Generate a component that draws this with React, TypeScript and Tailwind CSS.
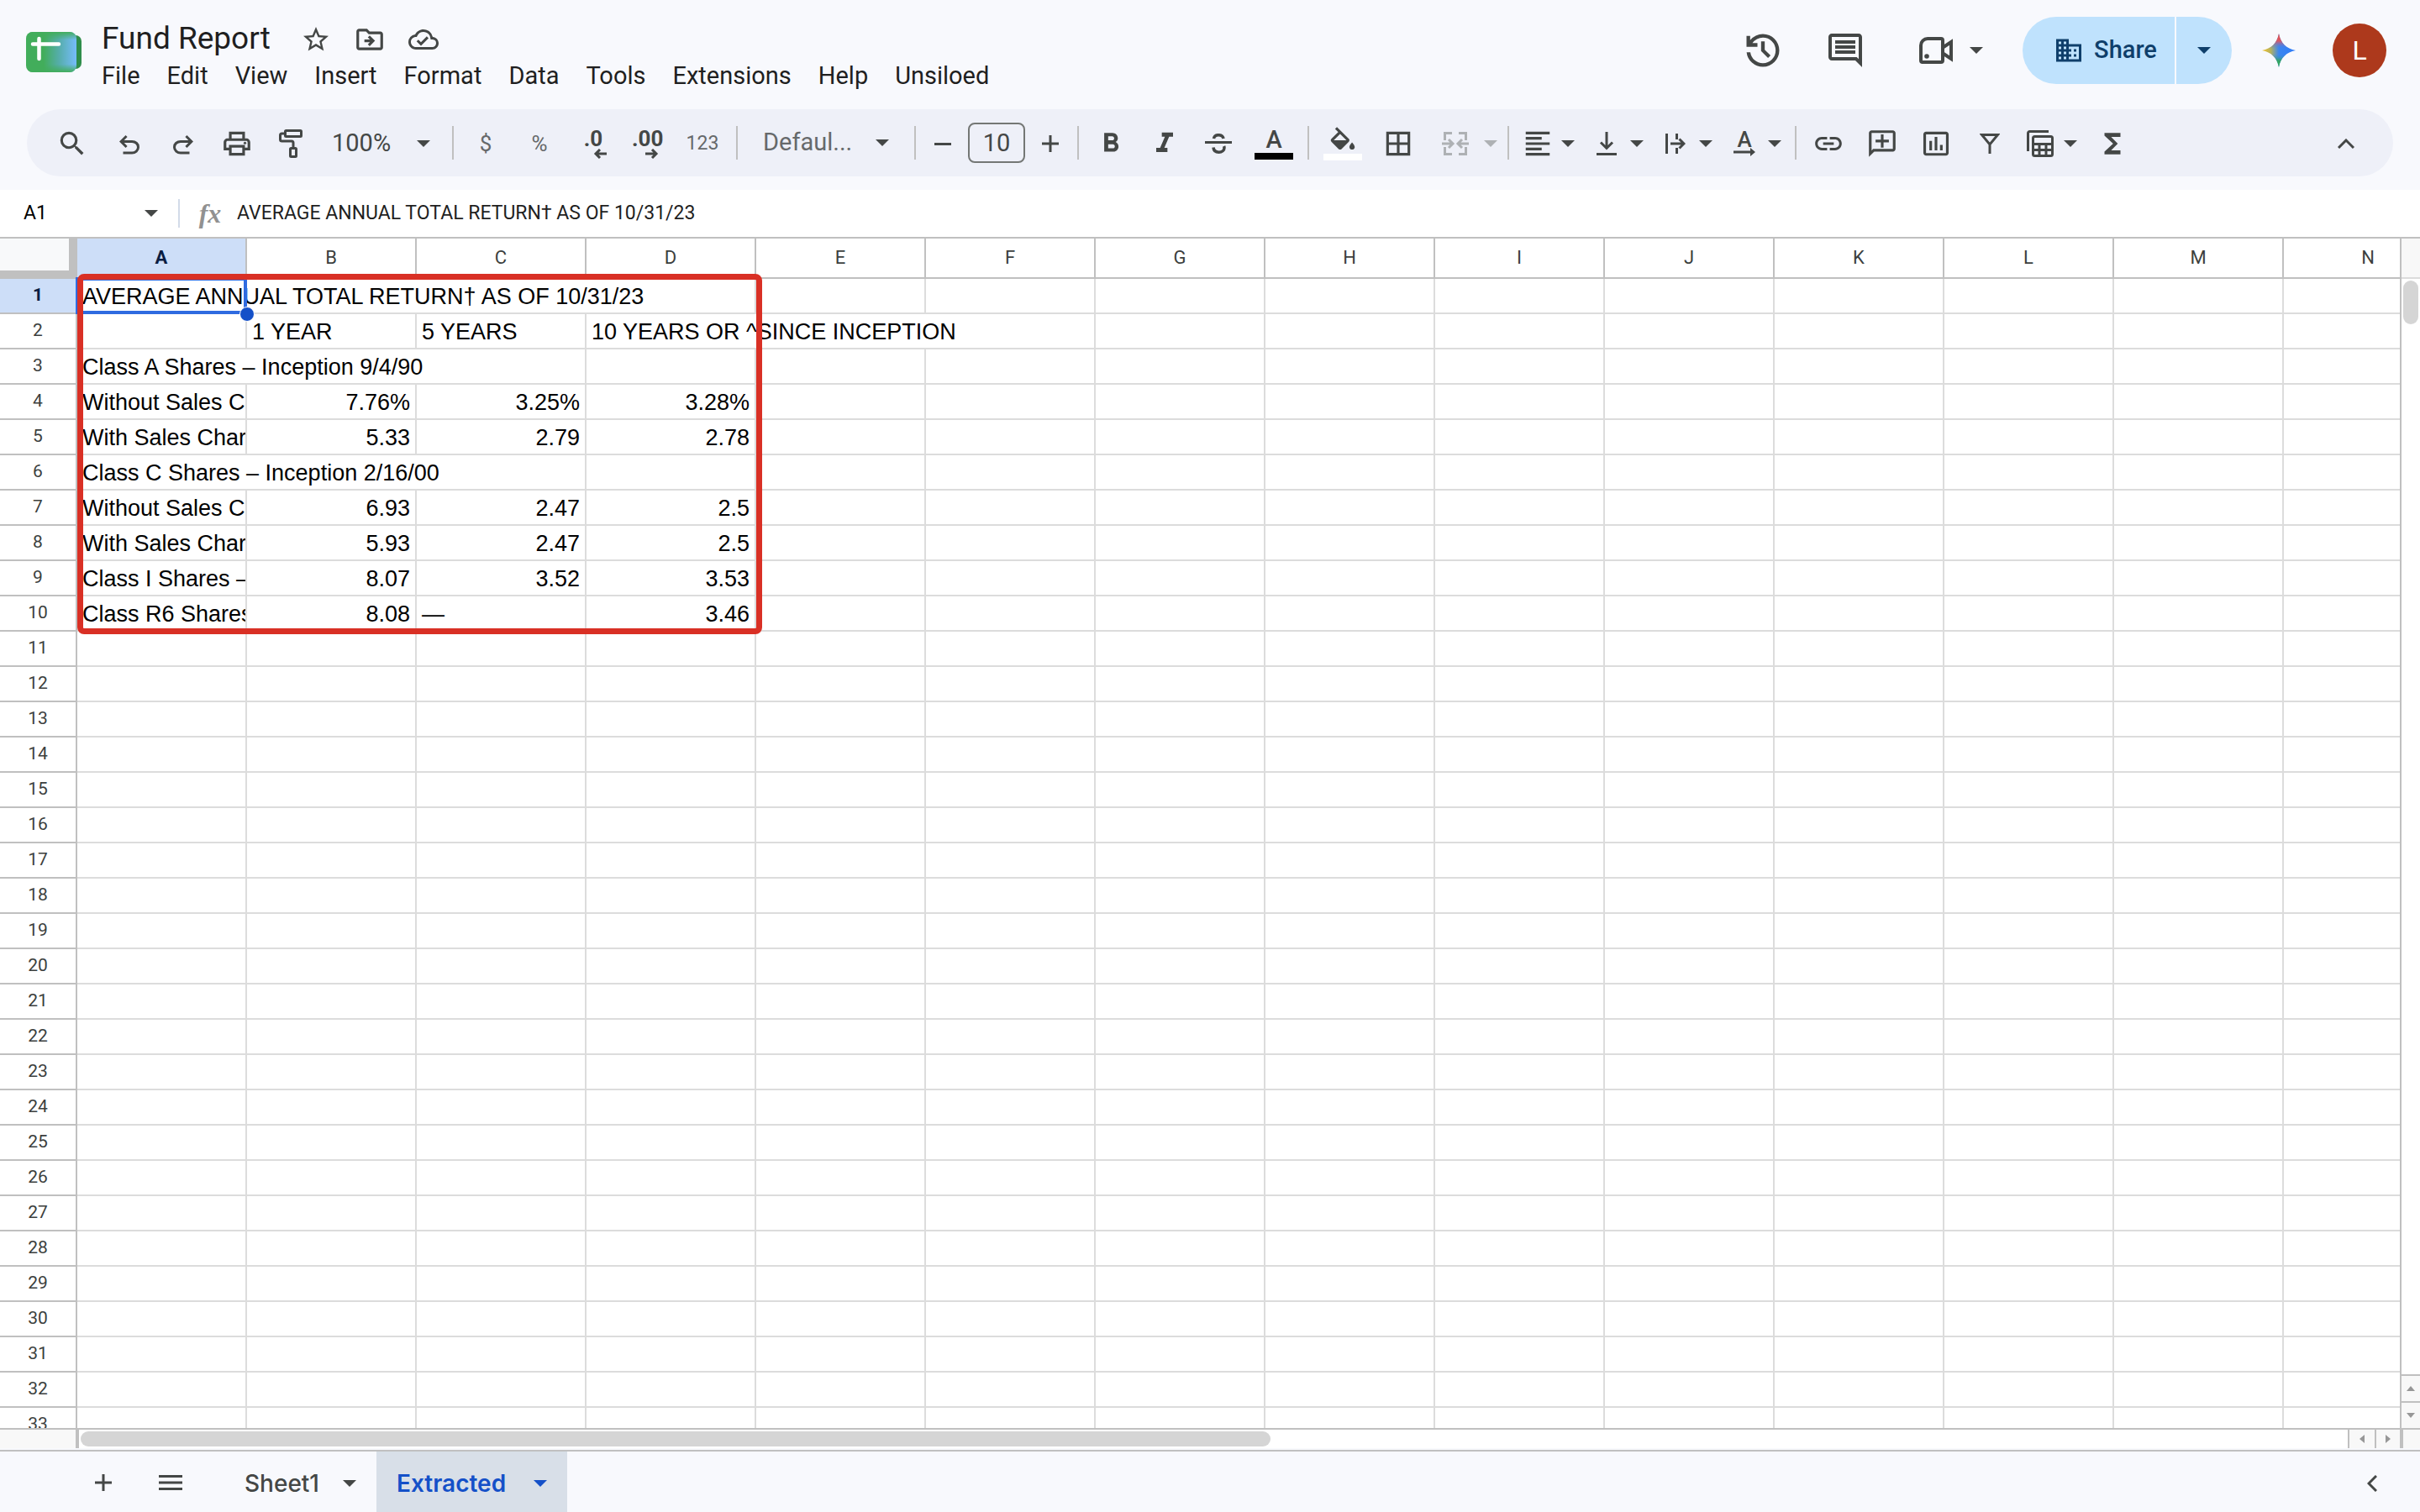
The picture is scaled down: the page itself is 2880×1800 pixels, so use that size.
import React, { useState } from 'react'
import {
  MdBorderAll,
  MdDomain,
  MdFormatAlignLeft,
  MdFormatBold,
  MdFormatItalic,
  MdFunctions,
  MdInsertChartOutlined,
  MdLink,
  MdOutlineAddComment,
  MdOutlineCloudDone,
  MdOutlineComment,
  MdOutlineDriveFileMove,
  MdOutlinePrint,
  MdSearch,
  MdStarBorder,
} from 'react-icons/md'

type Cell = {
  text: string
  span?: number
  right?: boolean
}

const MENUS = [
  'File',
  'Edit',
  'View',
  'Insert',
  'Format',
  'Data',
  'Tools',
  'Extensions',
  'Help',
  'Unsiloed',
]

const COLUMNS = 'ABCDEFGHIJKLMN'.split('')
const ROW_COUNT = 33

const num = (text: string): Cell => ({ text, right: true })

// span > 1 lets long text run over the empty cells to its right
const DATA: Array<Array<Cell>> = [
  [{ text: 'AVERAGE ANNUAL TOTAL RETURN† AS OF 10/31/23', span: 4 }],
  [
    { text: '' },
    { text: '1 YEAR' },
    { text: '5 YEARS' },
    { text: '10 YEARS OR ^SINCE INCEPTION', span: 3 },
  ],
  [{ text: 'Class A Shares – Inception 9/4/90', span: 3 }],
  [{ text: 'Without Sales Charge' }, num('7.76%'), num('3.25%'), num('3.28%')],
  [{ text: 'With Sales Charge' }, num('5.33'), num('2.79'), num('2.78')],
  [{ text: 'Class C Shares – Inception 2/16/00', span: 3 }],
  [{ text: 'Without Sales Charge' }, num('6.93'), num('2.47'), num('2.5')],
  [{ text: 'With Sales Charge' }, num('5.93'), num('2.47'), num('2.5')],
  [{ text: 'Class I Shares – Inception' }, num('8.07'), num('3.52'), num('3.53')],
  [{ text: 'Class R6 Shares – Inception' }, num('8.08'), { text: '—' }, num('3.46')],
]

const Caret = ({ className = '' }: { className?: string }) => (
  <svg className={`h-2 w-4 shrink-0 ${className}`} viewBox="0 0 16 8" fill="currentColor">
    <path d="M0 0h16L8 8z" />
  </svg>
)

const Divider = () => <div className="mx-1.5 h-10 w-0.5 shrink-0 bg-[#c0c0c0]" />

const Tool = ({
  label,
  className = 'w-16',
  children,
}: {
  label: string
  className?: string
  children: React.ReactNode
}) => (
  <button
    aria-label={label}
    className={`flex h-14 shrink-0 items-center justify-center pt-0.5 ${className}`}
  >
    {children}
  </button>
)

const DropTool = ({ label, children }: { label: string; children: React.ReactNode }) => (
  <button aria-label={label} className="flex h-14 w-[82px] shrink-0 items-center pt-0.5">
    <span className="flex w-14 justify-center">{children}</span>
    <Caret />
  </button>
)

const HistoryIcon = () => (
  <svg className="size-[52px]" viewBox="0 -960 960 960" fill="currentColor">
    <path d="M480-120q-138 0-240.5-91.5T122-440h82q14 104 92.5 172T480-200q117 0 198.5-81.5T760-480q0-117-81.5-198.5T480-760q-69 0-129 32t-101 88h110v80H120v-240h80v94q51-64 124.5-99T480-840q75 0 140.5 28.5t114 77q48.5 48.5 77 114T840-480q0 75-28.5 140.5t-77 114q-48.5 48.5-114 77T480-120Zm112-192L440-464v-216h80v184l128 128-56 56Z" />
  </svg>
)

const UndoIcon = ({ className = '' }: { className?: string }) => (
  <svg className={`mt-1 size-9 ${className}`} viewBox="0 -960 960 960" fill="currentColor">
    <path d="M280-200v-80h284q63 0 109.5-40T720-420q0-60-46.5-100T564-560H312l104 104-56 56-200-200 200-200 56 56-104 104h252q97 0 169.5 63T800-420q0 94-72.5 157T564-200H280Z" />
  </svg>
)

const SheetsLogo = () => (
  <svg className="h-12 w-[66px]" viewBox="0 0 66 48">
    <defs>
      <linearGradient id="logo" x1="0" x2="1">
        <stop offset="0.35" stopColor="#42ad5b" />
        <stop offset="0.65" stopColor="#55adaa" />
        <stop offset="1" stopColor="#76bcfb" />
      </linearGradient>
      <linearGradient id="logoEdge" x1="0" x2="0" y1="0" y2="1">
        <stop offset="0" stopColor="#42ad5b" />
        <stop offset="0.2" stopColor="#42ad5b" stopOpacity="0" />
        <stop offset="0.8" stopColor="#42ad5b" stopOpacity="0" />
        <stop offset="1" stopColor="#42ad5b" />
      </linearGradient>
    </defs>
    <rect x="46" y="4" width="20" height="40" rx="7" fill="#2f8d4b" />
    <rect width="60" height="48" rx="8" fill="url(#logo)" />
    <rect width="60" height="48" rx="8" fill="url(#logoEdge)" />
    <path d="M8 14.500H39M15.500 8v24" stroke="#fff" strokeWidth="4.500" strokeLinecap="round" />
  </svg>
)

const Header = () => (
  <header className="flex h-[130px] shrink-0 justify-between">
    <div className="flex pl-[31px]">
      <div className="pt-[38px]">
        <SheetsLogo />
      </div>
      <div className="ml-3 flex flex-col pt-[21px]">
        <div className="flex h-[50px] items-center">
          <button className="ml-3 w-[223px] text-left text-[37px] leading-10 whitespace-nowrap">
            Fund Report
          </button>
          <div className="flex text-[#444746]">
            <Tool label="Star">
              <MdStarBorder size={36} />
            </Tool>
            <Tool label="Move">
              <MdOutlineDriveFileMove size={38} />
            </Tool>
            <Tool label="Document status">
              <MdOutlineCloudDone size={36} />
            </Tool>
          </div>
        </div>
        <nav className="ml-3 flex h-10 items-center gap-8 text-[29px]">
          {MENUS.map((menu) => (
            <button key={menu}>{menu}</button>
          ))}
        </nav>
      </div>
    </div>

    <div className="flex h-[120px] items-center pr-10 text-[#444746]">
      <button aria-label="Version history" className="mr-12">
        <HistoryIcon />
      </button>
      <button aria-label="Comments" className="mr-16">
        <MdOutlineComment size={48} />
      </button>
      <button aria-label="Join a call" className="mr-[47px] flex items-center gap-5">
        <svg className="h-8 w-10" viewBox="0 0 40 32" fill="none" stroke="currentColor" strokeWidth="4">
          <path d="M10 2h16a2 2 0 0 1 2 2v24a2 2 0 0 1-2 2H4a2 2 0 0 1-2-2V10a8 8 0 0 1 8-8z" />
          <path d="M29 12l9-6v20l-9-6" />
          <circle cx="9" cy="23" r="2.800" fill="currentColor" stroke="none" />
        </svg>
        <Caret />
      </button>
      <div className="mr-9 flex h-20 gap-0.5 text-[#0f3f6b]">
        <button className="flex w-[181px] items-center justify-center gap-3 rounded-l-full bg-[#bfe2fd] pl-4 text-[29px] font-medium">
          <MdDomain size={36} />
          Share
        </button>
        <button
          aria-label="Share options"
          className="flex w-[66px] items-center justify-center rounded-r-full bg-[#bfe2fd]"
        >
          <Caret />
        </button>
      </div>
      <button aria-label="Gemini" className="mr-11">
        <svg className="size-10" viewBox="0 0 40 40">
          <defs>
            <linearGradient id="sparkX" x1="0" x2="1">
              <stop offset="0" stopColor="#f5c32c" />
              <stop offset="0.25" stopColor="#b9b35a" />
              <stop offset="0.5" stopColor="#3b86f0" />
              <stop offset="1" stopColor="#2f7bf8" />
            </linearGradient>
            <linearGradient id="sparkY" x1="0" x2="0" y1="0" y2="1">
              <stop offset="0" stopColor="#ee4a3f" />
              <stop offset="0.22" stopColor="#d65a68" />
              <stop offset="0.45" stopColor="#3b86f0" stopOpacity="0" />
              <stop offset="0.6" stopColor="#3b86f0" stopOpacity="0" />
              <stop offset="0.8" stopColor="#35a36a" />
              <stop offset="1" stopColor="#34b04f" />
            </linearGradient>
          </defs>
          <path d="M20 0C22 11 29 18 40 20 29 22 22 29 20 40 18 29 11 22 0 20 11 18 18 11 20 0z" fill="url(#sparkX)" />
          <path d="M20 0C22 11 29 18 40 20 29 22 22 29 20 40 18 29 11 22 0 20 11 18 18 11 20 0z" fill="url(#sparkY)" />
        </svg>
      </button>
      <button className="size-16 rounded-full bg-[#ad391c] text-[32px] text-white">L</button>
    </div>
  </header>
)

const Toolbar = () => (
  <div className="mx-8 flex h-20 shrink-0 items-center rounded-full bg-[#eef0f8] pl-[22px] text-[29px] text-[#444746]">
    <Tool label="Search the menus" className="mr-1 w-16">
      <MdSearch size={38} />
    </Tool>
    <Tool label="Undo">
      <UndoIcon />
    </Tool>
    <Tool label="Redo">
      <UndoIcon className="-scale-x-100" />
    </Tool>
    <Tool label="Print">
      <MdOutlinePrint size={38} />
    </Tool>
    <Tool label="Paint format">
      <svg className="h-[34px] w-7" viewBox="0 0 28 34" fill="none" stroke="currentColor" strokeWidth="3">
        <rect x="7.500" y="1.500" width="19" height="7" rx="1" />
        <path d="M7 5H3.500a2 2 0 0 0-2 2v5a2 2 0 0 0 2 2H15a2 2 0 0 1 2 2v6" />
        <rect x="13.500" y="22.500" width="7" height="10" rx="1" />
      </svg>
    </Tool>
    <div className="relative flex h-14 w-[154px] items-center pt-0.5 pl-[17px]">
      <select aria-label="Zoom" className="w-full appearance-none bg-transparent">
        <option>100%</option>
      </select>
      <Caret className="pointer-events-none absolute right-5" />
    </div>
    <Divider />
    <Tool label="Format as currency">
      <span className="text-[26px] text-[#66696b]">$</span>
    </Tool>
    <Tool label="Format as percent">
      <span className="text-[26px] text-[#66696b]">%</span>
    </Tool>
    <Tool label="Decrease decimal places">
      <span className="flex w-8 flex-col">
        <span className="text-[26px] leading-6 font-bold">.0</span>
        <svg className="ml-4 h-3 w-4" viewBox="0 0 16 12" fill="none" stroke="currentColor" strokeWidth="3">
          <path d="M16 6H3M8 1L3 6l5 5" />
        </svg>
      </span>
    </Tool>
    <Tool label="Increase decimal places">
      <span className="flex w-9 flex-col">
        <span className="text-[26px] leading-6 font-bold">.00</span>
        <svg className="ml-4 h-3 w-4" viewBox="0 0 16 12" fill="none" stroke="currentColor" strokeWidth="3">
          <path d="M0 6h13M8 1l5 5-5 5" />
        </svg>
      </span>
    </Tool>
    <Tool label="More formats" className="w-[68px]">
      <span className="text-[23px] text-[#66696b]">123</span>
    </Tool>
    <Divider />
    <div className="relative flex h-14 w-[198px] items-center pl-6">
      <select aria-label="Font" className="w-full appearance-none bg-transparent text-[#66696b]">
        <option>Defaul...</option>
      </select>
      <Caret className="pointer-events-none absolute right-6" />
    </div>
    <Divider />
    <Tool label="Decrease font size" className="w-[52px]">
      <span className="h-[3px] w-5 bg-current" />
    </Tool>
    <input
      aria-label="Font size"
      defaultValue="10"
      className="mx-1 h-12 w-[68px] rounded-lg border-2 border-[#747775] bg-transparent text-center"
    />
    <Tool label="Increase font size" className="w-[52px]">
      <svg className="size-5" viewBox="0 0 20 20" stroke="currentColor" strokeWidth="3">
        <path d="M0 10h20M10 0v20" />
      </svg>
    </Tool>
    <Divider />
    <Tool label="Bold">
      <MdFormatBold size={38} />
    </Tool>
    <Tool label="Italic">
      <MdFormatItalic size={40} />
    </Tool>
    <Tool label="Strikethrough">
      <svg className="h-6 w-8" viewBox="0 0 32 24" fill="none" stroke="currentColor" strokeWidth="3.500">
        <path d="M0 10.500h32" strokeWidth="3" />
        <path d="M10.500 6C11 3 13 1.700 16 1.700S21.500 3 22 6M10 16.500c.3 3.500 2.700 5.700 6.500 5.700s6.500-2.200 6.500-5.200c0-.7-.1-1.300-.4-2" />
      </svg>
    </Tool>
    <Tool label="Text color" className="w-[68px]">
      <span className="flex flex-col items-center gap-0.5">
        <span className="text-[29px] leading-7 font-medium">A</span>
        <span className="h-2 w-[46px] bg-black" />
      </span>
    </Tool>
    <Divider />
    <Tool label="Fill color" className="w-[68px]">
      <span className="flex flex-col items-center">
        <svg className="h-8 w-[38px]" viewBox="0 0 24 20" fill="currentColor">
          <path d="M16.560 8.940L7.620 0 6.210 1.410l2.380 2.380-5.150 5.150a1.490 1.490 0 0 0 0 2.120l5.500 5.500c.29.290.68.440 1.060.440s.77-.150 1.060-.440l5.500-5.500c.590-.580.590-1.530 0-2.120zM5.210 10L10 5.210 14.790 10H5.210zM19 11.500s-2 2.170-2 3.500c0 1.100.9 2 2 2s2-.9 2-2c0-1.330-2-3.500-2-3.500z" />
        </svg>
        <span className="h-2 w-[46px] bg-white" />
      </span>
    </Tool>
    <Tool label="Borders">
      <MdBorderAll size={38} />
    </Tool>
    <button
      aria-label="Merge cells"
      disabled
      className="flex h-14 w-[92px] shrink-0 items-center gap-1.5 pt-0.5 pl-2 text-[#aeb1b4]"
    >
      <span className="flex w-14 justify-center">
        <svg className="h-7 w-8" viewBox="0 0 32 28" fill="none" stroke="currentColor" strokeWidth="3">
          <path d="M12 1.500H3.500V10M20 1.500h8.500V10M12 26.500H3.500V18M20 26.500h8.500V18" />
          <path d="M0 14h11M8 9l5 5-5 5M32 14H21M24 9l-5 5 5 5" />
        </svg>
      </span>
      <Caret />
    </button>
    <Divider />
    <DropTool label="Horizontal align">
      <MdFormatAlignLeft size={38} />
    </DropTool>
    <DropTool label="Vertical align">
      <svg className="h-7 w-6" viewBox="0 0 24 28" fill="none" stroke="currentColor" strokeWidth="3">
        <path d="M0 26.500h24M12 0v19M5 12.500l7 7 7-7" />
      </svg>
    </DropTool>
    <DropTool label="Text wrapping">
      <svg className="h-7 w-6" viewBox="0 0 24 28" fill="none" stroke="currentColor" strokeWidth="3">
        <path d="M1.500 2v24M13.500 2v7M13.500 19v7M6 14h15M16.500 8.500L22 14l-5.500 5.500" />
      </svg>
    </DropTool>
    <DropTool label="Text rotation">
      <span className="flex flex-col items-center">
        <span className="text-[26px] leading-5 font-medium">A</span>
        <svg className="h-2.5 w-[26px]" viewBox="0 0 26 10" fill="currentColor">
          <path d="M0 3.500h20V0l6 5-6 5V6.500H0z" />
        </svg>
      </span>
    </DropTool>
    <Divider />
    <Tool label="Insert link">
      <MdLink size={38} />
    </Tool>
    <Tool label="Insert comment">
      <MdOutlineAddComment size={38} className="-scale-x-100" />
    </Tool>
    <Tool label="Insert chart">
      <MdInsertChartOutlined size={38} />
    </Tool>
    <Tool label="Create a filter">
      <svg className="h-6 w-6" viewBox="0 0 24 24" fill="none" stroke="currentColor" strokeWidth="3">
        <path d="M2.500 1.500h19L12 13zM12 12v12" />
      </svg>
    </Tool>
    <DropTool label="Table views">
      <svg className="size-8" viewBox="0 0 32 32" fill="none" stroke="currentColor" strokeWidth="3">
        <path d="M1.500 25V3.500a2 2 0 0 1 2-2H26" />
        <rect x="7.500" y="7.500" width="23" height="23" rx="2" />
        <path d="M7 16.500h24M7 23.500h24M15 16v15M23 16v15" />
      </svg>
    </DropTool>
    <Tool label="Functions">
      <MdFunctions size={38} />
    </Tool>
    <Tool label="Hide the menus" className="mr-6 ml-auto w-16">
      <svg className="h-3 w-5" viewBox="0 0 20 12" fill="none" stroke="currentColor" strokeWidth="3">
        <path d="M1 11l9-9 9 9" />
      </svg>
    </Tool>
  </div>
)

const FormulaBar = ({
  value,
  onChange,
}: {
  value: string
  onChange: (value: string) => void
}) => (
  <div className="mt-4 flex h-[58px] shrink-0 items-center border-b-2 border-[#c0c0c0] bg-white">
    <div className="flex w-[212px] items-center pr-6 pl-7">
      <input
        aria-label="Name box"
        defaultValue="A1"
        className="w-full min-w-0 bg-transparent text-[23px] text-black"
      />
      <Caret className="text-[#444746]" />
    </div>
    <div className="h-[34px] w-0.5 bg-[#d3dbe9]" />
    <span className="w-[68px] pl-1 text-center font-['Liberation_Serif',serif] text-[32px] leading-8 font-bold text-[#919191] italic">
      fx
    </span>
    <input
      aria-label="Formula bar"
      value={value}
      onChange={(e) => onChange(e.target.value)}
      className="flex-1 bg-transparent text-[23px]"
    />
  </div>
)

const Grid = ({ title }: { title: string }) => {
  const rows = Array.from({ length: ROW_COUNT }, (_, i) => DATA[i] || [])

  return (
    <div className="relative min-w-0 flex-1 overflow-hidden bg-white">
      <table className="w-[2920px] table-fixed border-separate border-spacing-0">
        <colgroup>
          <col className="w-[92px]" />
          {COLUMNS.map((col) => (
            <col key={col} className="w-[202px]" />
          ))}
        </colgroup>
        <thead>
          <tr className="h-12 text-[22px] leading-6 text-[#3c3f3e]">
            <th className="border-r-[10px] border-b-[10px] border-[#c0c0c0] bg-[#f8f9fa] p-0" />
            {COLUMNS.map((col, index) => (
              <th
                key={col}
                className={`border-r-2 border-b-2 border-[#c0c0c0] p-0 ${
                  index === 0 ? 'bg-[#cddef8] font-bold text-[#0b1d42]' : 'font-normal'
                }`}
              >
                {col}
              </th>
            ))}
          </tr>
        </thead>
        <tbody>
          {rows.map((cells, row) => {
            const used = cells.reduce((sum, cell) => sum + (cell.span || 1), 0)
            return (
              <tr key={row} className="h-[42px]">
                <th
                  className={`border-r-2 border-b-2 border-[#c0c0c0] p-0 pb-0.5 text-[21px] leading-6 ${
                    row === 0
                      ? 'bg-[#cddef8] font-bold text-[#0b1d42]'
                      : 'font-normal text-[#3c3f3e]'
                  }`}
                >
                  {row + 1}
                </th>
                {cells.map((cell, index) => (
                  <td
                    key={index}
                    colSpan={cell.span || 1}
                    className={`overflow-hidden border-r-2 border-b-2 border-[#dcdcdc] px-1.5 pt-0.5 pb-0 font-['Liberation_Sans',Arial,sans-serif] text-[27px] leading-8 whitespace-nowrap text-black ${
                      cell.right ? 'text-right' : 'text-left'
                    }`}
                  >
                    {row === 0 ? title : cell.text}
                  </td>
                ))}
                {COLUMNS.slice(used).map((col) => (
                  <td key={col} className="border-r-2 border-b-2 border-[#dcdcdc] p-0" />
                ))}
              </tr>
            )
          })}
        </tbody>
      </table>

      {/* Active cell */}
      <div className="absolute top-[46px] left-[90px] h-11 w-[204px] border-4 border-[#2f6be0]" />
      <div className="absolute top-[81px] left-[285px] size-[18px] rounded-full border border-white bg-[#1450c8]" />

      {/* Highlighted range */}
      <div className="absolute top-[42px] left-[92px] h-[429px] w-[815px] rounded-lg border-7 border-[#d93025]" />
    </div>
  )
}

const VerticalScroll = () => (
  <div className="flex w-6 shrink-0 flex-col border-l-2 border-[#c0c0c0] bg-white text-[#979797]">
    <div className="h-12 border-b-2 border-[#dcdcdc] bg-[#f8f8f8]" />
    <div className="mx-0.5 mt-0.5 h-[52px] w-[18px] rounded-full bg-[#d5d5d5]" />
    <button
      aria-label="Scroll up"
      className="mt-auto flex h-8 items-center justify-center border-t-2 border-[#c0c0c0] bg-[#f8f8f8]"
    >
      <svg className="h-1.5 w-2.5" viewBox="0 0 10 6" fill="currentColor">
        <path d="M0 6h10L5 0z" />
      </svg>
    </button>
    <button
      aria-label="Scroll down"
      className="flex h-8 items-center justify-center border-t-2 border-[#c0c0c0] bg-[#f8f8f8]"
    >
      <svg className="h-1.5 w-2.5" viewBox="0 0 10 6" fill="currentColor">
        <path d="M0 0h10L5 6z" />
      </svg>
    </button>
  </div>
)

const HorizontalScroll = () => (
  <div className="flex h-6 shrink-0 border-t-2 border-[#c0c0c0] bg-white text-[#979797]">
    <div className="w-[94px] border-r-4 border-[#c0c0c0] bg-[#f8f8f8]" />
    <div className="flex flex-1 items-center px-0.5">
      <div className="h-[18px] w-[1416px] rounded-full bg-[#d5d5d5]" />
    </div>
    <button
      aria-label="Scroll left"
      className="flex w-8 items-center justify-center border-l-2 border-[#c0c0c0] bg-[#f8f8f8]"
    >
      <svg className="h-2.5 w-1.5" viewBox="0 0 6 10" fill="currentColor">
        <path d="M6 0v10L0 5z" />
      </svg>
    </button>
    <button
      aria-label="Scroll right"
      className="flex w-[30px] items-center justify-center border-l-2 border-[#c0c0c0] bg-[#f8f8f8]"
    >
      <svg className="h-2.5 w-1.5" viewBox="0 0 6 10" fill="currentColor">
        <path d="M0 0v10l6-5z" />
      </svg>
    </button>
    <div className="w-6 border-l-4 border-[#c0c0c0] bg-[#f8f8f8]" />
  </div>
)

const SheetTabs = () => (
  <footer className="mt-0.5 flex h-[74px] shrink-0 items-center border-t-2 border-[#c0c0c0] font-[Inter,sans-serif] text-[28px] font-medium text-[#444746]">
    <button aria-label="Add sheet" className="ml-[83px] flex w-20 justify-center pt-0.5">
      <svg className="size-5" viewBox="0 0 20 20" stroke="currentColor" strokeWidth="3">
        <path d="M0 10h20M10 0v20" />
      </svg>
    </button>
    <button aria-label="All sheets" className="flex w-20 justify-center pt-0.5">
      <svg className="h-[18px] w-7" viewBox="0 0 28 18" stroke="currentColor" strokeWidth="3">
        <path d="M0 1.500h28M0 9h28M0 16.500h28" />
      </svg>
    </button>
    <button className="ml-6 flex h-full w-[181px] items-center justify-between px-6 pt-1">
      Sheet1
      <Caret />
    </button>
    <button className="flex h-full w-[227px] items-center justify-between bg-[#d8dfe8] px-6 pt-1 font-semibold text-[#1450c8]">
      Extracted
      <Caret />
    </button>
    <button aria-label="Show side panel" className="mr-[51px] ml-auto pt-1">
      <svg className="h-5 w-3" viewBox="0 0 12 20" fill="none" stroke="currentColor" strokeWidth="3">
        <path d="M11 1l-9 9 9 9" />
      </svg>
    </button>
  </footer>
)

export default function App() {
  const [title, setTitle] = useState(DATA[0][0].text)

  return (
    <div className="flex h-screen flex-col overflow-hidden bg-[#f8f9fd] font-[Roboto,sans-serif] text-[#1f1f1f]">
      <Header />
      <Toolbar />
      <FormulaBar value={title} onChange={setTitle} />
      <div className="flex min-h-0 flex-1">
        <Grid title={title} />
        <VerticalScroll />
      </div>
      <HorizontalScroll />
      <SheetTabs />
    </div>
  )
}
